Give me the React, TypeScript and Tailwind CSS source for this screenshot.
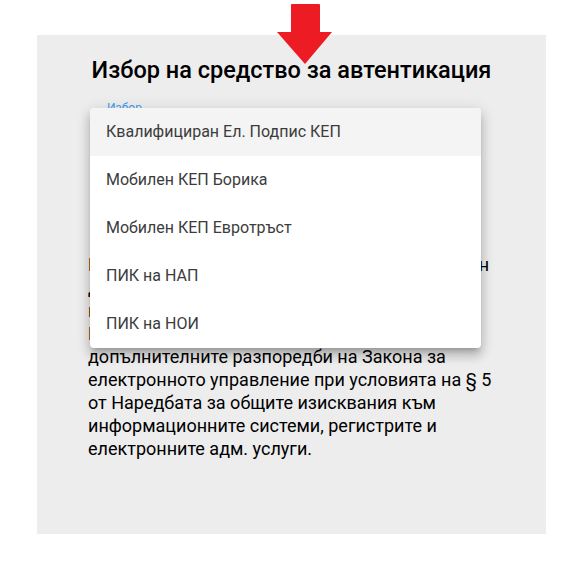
const options = [
  'Квалифициран Ел. Подпис КЕП',
  'Мобилен КЕП Борика',
  'Мобилен КЕП Евротръст',
  'ПИК на НАП',
  'ПИК на НОИ',
];

// paragraph lines, first four sit under the open menu
const lines = [
  'Всяко от тези средства е осигурено от доверен',
  'доставчик с ниво на осигуреност „високо“',
  'по смисъла на § 1, т. 12 и т. 13 от',
  'Регламента и е средство по смисъла на',
  'допълнителните разпоредби на Закона за',
  'електронното управление при условията на § 5',
  'от Наредбата за общите изисквания към',
  'информационните системи, регистрите и',
  'електронните адм. услуги.',
];

function Arrow() {
  return (
    <svg
      className="absolute left-[276px] top-[3px]"
      width="58"
      height="63"
      viewBox="0 0 58 63"
    >
      <path
        d="M15 2 Q15 1 16 1 L43 1 Q44 1 44 2 L44 29 L56 29 L29 61 L1 29 L15 29 Z"
        fill="#ed1c24"
      />
    </svg>
  );
}

export default function App() {
  return (
    <div
      className="relative w-[567px] h-[565px] bg-white pt-[35px] pl-[37px]"
      style={{ fontFamily: 'Roboto, "Noto Sans", sans-serif' }}
    >
      <div className="relative w-[509px] h-[499px] bg-[#ededed] pt-[21px]">
        <h1 className="text-center text-[23.5px] leading-[28px] font-medium text-black">
          Избор на средство за автентикация
        </h1>

        <div className="mt-[17px] pl-[70px] text-[12px] leading-[14px] text-[#3d9bf0]">Избор</div>
        <div className="mt-[2px] h-[32px]" />

        <p className="mt-[104px] pl-[51px] text-[18px] leading-[23px] text-black">
          {lines.map((l, i) => (
            <span key={i}>
              {l}
              <br />
            </span>
          ))}
        </p>

        {/* open select menu */}
        <ul className="absolute left-[53px] top-[73px] w-[391px] bg-white rounded-[4px] overflow-hidden shadow-[0_5px_5px_-3px_rgba(0,0,0,0.2),0_8px_10px_1px_rgba(0,0,0,0.14),0_3px_14px_2px_rgba(0,0,0,0.12)]">
          {options.map((o, i) => (
            <li
              key={o}
              className={
                'h-[48px] flex items-center pl-[16px] text-[16px] text-[#3c3c3c] ' +
                (i === 0 ? 'bg-[#f4f4f4]' : '')
              }
            >
              {o}
            </li>
          ))}
        </ul>
      </div>

      <Arrow />
    </div>
  );
}
